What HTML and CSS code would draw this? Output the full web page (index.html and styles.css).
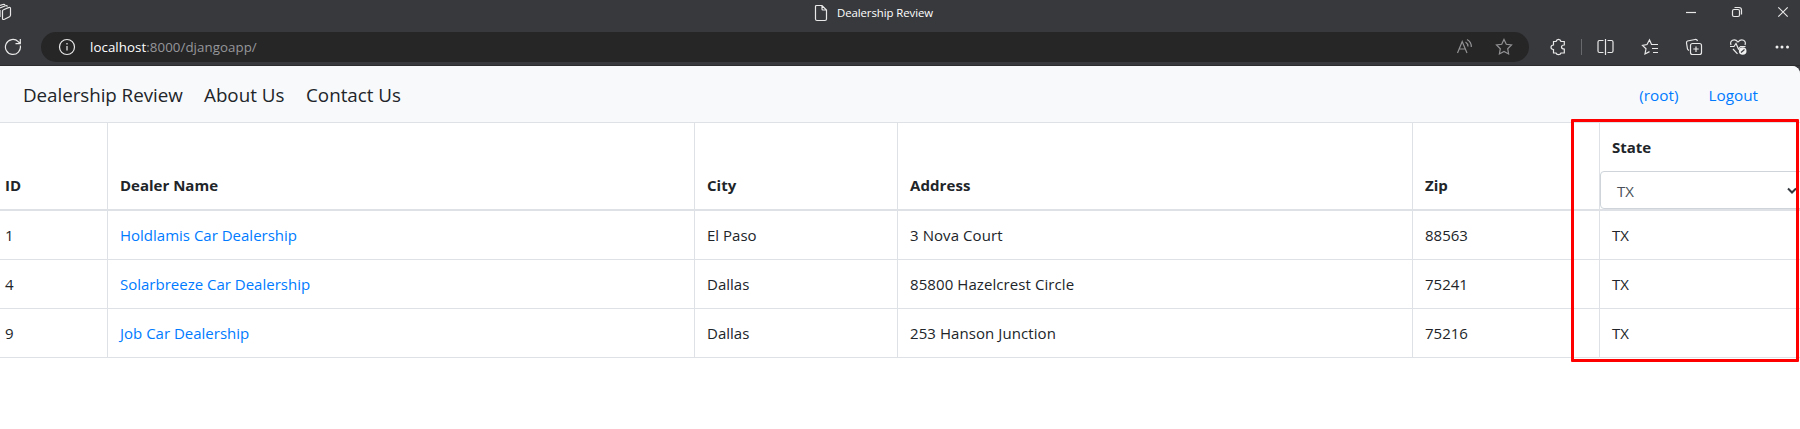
FILE: index.html
```html
<!DOCTYPE html>
<html lang="en">
<head>
<meta charset="utf-8">
<title>Dealership Review</title>
<link rel="stylesheet" href="styles.css">
</head>
<body>
<header class="browser">
  <div class="titlebar">
    <svg class="workspaces" width="12" height="24" viewBox="0 0 12 24"><path d="M2.500 11 Q2.500 10 3.500 9.700 L8.500 7.600 Q10.500 7 10.500 8.500 V15 Q10.500 16.200 9.500 16.700 L4.500 19.200 Q2.500 20 2.500 18.500 Z M0 16.500 M0 8 L5.500 5.800 Q7 5.300 7.500 6.500 M0 5.500 L3 4.500 Q4.500 4 5 5 M0 10 V17"/></svg>
    <div class="tab-title">
      <svg width="14" height="18" viewBox="0 0 14 18"><path d="M2.500 1.500 H8 L12.500 6 V15 Q12.500 16.500 11 16.500 H3 Q1.500 16.500 1.500 15 V2.500 Q1.500 1.500 2.500 1.500 Z M8 1.500 V5 Q8 6 9 6 H12.500"/></svg>
      <span>Dealership Review</span>
    </div>
    <div class="window-controls">
      <svg width="34" height="24" viewBox="0 0 34 24"><path d="M12 12.500 H22"/></svg>
      <svg width="34" height="24" viewBox="0 0 34 24"><rect x="12.500" y="9.500" width="7" height="7" rx="1.500"/><path d="M14.500 7.500 H19 Q21.500 7.500 21.500 10 V14.500"/></svg>
      <svg width="34" height="24" viewBox="0 0 34 24"><path d="M12.300 7.300 L21.700 16.700 M21.700 7.300 L12.300 16.700"/></svg>
    </div>
  </div>
  <div class="toolbar">
    <svg class="reload" width="18" height="18" viewBox="0 0 18 18"><path d="M16.300 7.500 A7.500 7.500 0 1 1 14.200 3.600 L16 5.500 M16.300 1 V5.700 H11.500"/></svg>
    <div class="address">
      <svg width="18" height="18" viewBox="0 0 18 18"><circle cx="9" cy="9" r="7.500"/><path d="M9 8 V12.500 M9 5 V6.500"/></svg>
      <span class="url"><b>localhost</b>:8000/djangoapp/</span>
      <div class="address-actions">
        <svg width="18" height="18" viewBox="0 0 18 18"><path d="M1.500 15 L6.200 3.500 L11 15 M3 11 H9.500 M9.500 4 Q12 5.500 12 8.500 M11 1.500 Q15.500 4 15.300 9"/></svg>
        <svg width="18" height="18" viewBox="0 0 18 18"><path d="M9 1.500 L11.300 6.300 L16.500 7 L12.700 10.700 L13.600 16 L9 13.500 L4.400 16 L5.300 10.700 L1.500 7 L6.700 6.300 Z"/></svg>
      </div>
    </div>
    <div class="actions">
      <svg class="extensions" width="18" height="18" viewBox="0 0 18 18"><path d="M4.500 3.500 H7 Q7.500 1.300 9.500 1.300 Q11.500 1.300 12 3.500 H15.300 V7 Q12.500 7 12.500 9 Q12.500 11 15.300 11 V15 H12 Q11.500 16.700 9.500 16.700 Q7.500 16.700 7 15 H4.500 V11.500 Q2 11.200 2 9.200 Q2 7.200 4.500 7 Z"/></svg>
      <span class="divider"></span>
      <svg width="36" height="18" viewBox="0 0 36 18"><path d="M15.500 2.500 H11.500 Q10 2.500 10 4 V13 Q10 14.500 11.500 14.500 H15.500 M19.500 2.500 H23.500 Q25 2.500 25 4 V13 Q25 14.500 23.500 14.500 H19.500 M17.500 1 V17"/></svg>
      <svg width="36" height="18" viewBox="0 0 36 18"><path d="M21 6.500 H19.500 L17.500 1.800 L15 6.500 L10.500 7.300 L14 10.800 L13 16 L17.500 13.600 M21 6.500 H26 M20 10.500 H26 M21 14.500 H26"/></svg>
      <svg width="36" height="18" viewBox="0 0 36 18"><rect x="14.500" y="5.500" width="11" height="11" rx="2"/><path d="M20 8.500 V14 M17.300 11 H22.700 M13 12.500 Q12 12 11.500 11 L10.500 5 Q10.300 3.500 11.500 3 L19 1.500 Q21 1.200 21.500 3"/></svg>
      <svg width="36" height="18" viewBox="0 0 36 18"><path d="M11 7 Q9.800 3.500 12.500 2.200 Q15.500 .8 18 4 Q20.500 .8 23.500 2.200 Q26.200 3.500 25 7 M10 8.500 H14 L16 5.500 L18.500 11 L20.500 8.500 H25.500 M13 11 L17.500 15.800"/><circle class="fill" cx="22.700" cy="13" r="3.800"/><path class="tick" d="M21 14.500 L24.500 11.500"/></svg>
      <svg width="36" height="18" viewBox="0 0 36 18"><g class="fill"><circle cx="13" cy="9" r="1.500"/><circle cx="18" cy="9" r="1.500"/><circle cx="23.500" cy="9" r="1.500"/></g></svg>
    </div>
  </div>
</header>
<main class="page">
  <nav class="navbar">
    <a class="nav-link brand">Dealership Review</a>
    <a class="nav-link about">About Us</a>
    <a class="nav-link">Contact Us</a>
    <div class="account"><a class="user">(root)</a><a class="logout">Logout</a></div>
  </nav>
  <div class="table">
    <div class="row head">
      <div>ID</div><div>Dealer Name</div><div>City</div><div>Address</div><div>Zip</div>
      <div class="state"><span>State</span>
        <div class="select"><span>TX</span><svg width="10" height="8" viewBox="0 0 10 8"><path d="M1 1.500 L5 5.500 L9 1.500"/></svg></div>
      </div>
    </div>
    <div class="row"><div>1</div><div><a>Holdlamis Car Dealership</a></div><div>El Paso</div><div>3 Nova Court</div><div>88563</div><div>TX</div></div>
    <div class="row"><div>4</div><div><a>Solarbreeze Car Dealership</a></div><div>Dallas</div><div>85800 Hazelcrest Circle</div><div>75241</div><div>TX</div></div>
    <div class="row"><div>9</div><div><a>Job Car Dealership</a></div><div>Dallas</div><div>253 Hanson Junction</div><div>75216</div><div>TX</div></div>
  </div>
  <div class="highlight"></div>
</main>
</body>
</html>
```
FILE: styles.css
```css
* { box-sizing: border-box; }
body {
  margin: 0;
  width: 1800px;
  height: 429px;
  overflow: hidden;
  background: #38393d;
  color: #212529;
  font-family: "Open Sans", "Noto Sans", sans-serif;
  font-size: 15px;
}
svg { display: block; flex: none; fill: none; stroke: #e8e8e8; stroke-width: 1.2; }
.fill { fill: #f0f0f0; stroke: none; }
.tick { stroke: #38393d; }

.browser { height: 66px; border-bottom: 1px solid #2c2c2f; color: #fff; }
.titlebar { display: flex; align-items: center; height: 24px; }
.tab-title {
  display: flex;
  align-items: center;
  gap: 9px;
  margin-left: 802px;
  font-size: 11.4px;
  letter-spacing: -.08px;
  line-height: 24px;
  padding-top: 1px;
}
.window-controls { display: flex; gap: 12px; margin-left: auto; }
.toolbar { display: flex; align-items: center; height: 30px; margin-top: 8px; }
.reload { margin: 0 19px 0 4px; }
.address {
  display: flex;
  align-items: center;
  width: 1488px;
  height: 30px;
  padding: 0 16px 0 17px;
  border-radius: 15px;
  background: #262627;
}
.url { margin-left: 14px; color: #96979a; font-size: 13.3px; letter-spacing: .06px; line-height: 30px; }
.url b { color: #fff; font-weight: 400; }
.address-actions { display: flex; gap: 21px; margin-left: auto; }
.address-actions svg { stroke: #929294; }
.actions { display: flex; align-items: center; gap: 8px; margin-left: auto; }
.extensions { margin-right: 6px; }
.divider { width: 1px; height: 16px; margin-right: -2px; background: #68696c; }

.page { position: relative; height: 363px; background: #fff; border-top-right-radius: 8px; overflow: hidden; }
.navbar {
  display: flex;
  align-items: center;
  height: 57px;
  padding: 1px 42px 0 23px;
  border-bottom: 1px solid #dee2e6;
  background: #f8f9fb;
}
.nav-link { font-size: 18.8px; line-height: 30px; }
.brand { width: 181px; letter-spacing: -.05px; }
.about { width: 102px; }
.account { display: flex; gap: 30px; margin-left: auto; font-size: 15.3px; }
.account a, .row a { color: #007bff; }

.row {
  display: grid;
  grid-template-columns: 107px 587px 203px 515px 187px 201px;
  height: 49px;
  border-bottom: 1px solid #dee2e6;
  line-height: 24px;
}
.row > div { padding: 12px 12px 0; border-left: 1px solid #dee2e6; white-space: nowrap; }
.row > div:first-child { padding-left: 5px; border-left: 0; }
.row > div:nth-child(4) { letter-spacing: .08px; }
.head { height: 88px; border-bottom-width: 2px; font-weight: 700; }
.head > div { padding-top: 50px; }
.head > .state { padding: 12px 0 0; }
.state > span { display: block; padding-left: 12px; }
.select {
  display: flex;
  align-items: center;
  justify-content: space-between;
  width: 204px;
  height: 38px;
  margin-top: 12px;
  padding: 2px 6px 0 16px;
  border: 1px solid #ced4da;
  border-radius: 4px;
  color: #495057;
  font-weight: 400;
}
.select svg { stroke: #343a40; stroke-width: 2; }
.highlight {
  position: absolute;
  left: 1571px;
  top: 53px;
  width: 228px;
  height: 243px;
  border: 3px solid #f00;
  border-radius: 1px;
}
```
